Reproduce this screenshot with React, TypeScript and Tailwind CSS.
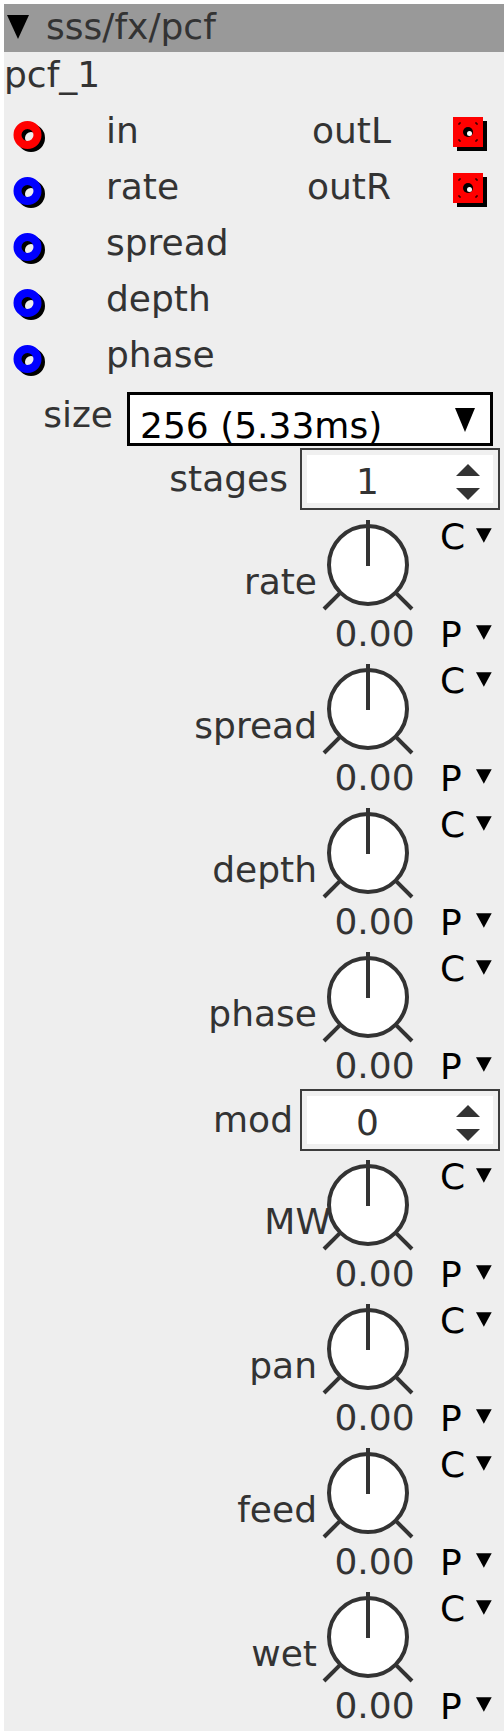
import React from "react";

type Port = { label: string; color: string; out?: string };

const ports: Port[] = [
  { label: "in", color: "#ff0000", out: "outL" },
  { label: "rate", color: "#0000ff", out: "outR" },
  { label: "spread", color: "#0000ff" },
  { label: "depth", color: "#0000ff" },
  { label: "phase", color: "#0000ff" },
];

function Tri({ w, h, className }: { w: number; h: number; className?: string }) {
  return (
    <svg width={w} height={h} viewBox={`0 0 ${w} ${h}`} className={className}>
      <polygon points={`0,0 ${w},0 ${w / 2},${h}`} fill="#000" />
    </svg>
  );
}

function InPort({ color }: { color: string }) {
  return (
    <svg width="44" height="56" viewBox="0 0 44 56">
      <circle cx="27" cy="35" r="10" fill="none" stroke="#000" strokeWidth="8" />
      <circle cx="23.5" cy="32" r="10" fill="none" stroke={color} strokeWidth="8" />
    </svg>
  );
}

function OutPort() {
  return (
    <svg width="40" height="56" viewBox="0 0 40 56">
      <rect x="7" y="18" width="30" height="30" fill="#000" />
      <rect x="3" y="14" width="30" height="30" fill="#ff0000" />
      <path d="M9 22v-2h2M25 20h2v2M9 36v2h2M25 38h2v-2" stroke="#000" strokeWidth="1" fill="none" />
      <circle cx="18" cy="29" r="5" fill="#000" />
      <circle cx="19.5" cy="30.5" r="2.5" fill="#fff" />
    </svg>
  );
}

function Spin({ value }: { value: string }) {
  return (
    <div className="flex h-[62px] w-[200px] border-2 border-[#3c3c3c] bg-[#f0f0f0] p-[5px]">
      <div className="flex flex-1 bg-white">
        <div className="w-[121px] pt-[6px] text-center leading-[42px] text-[#333]">{value}</div>
        <svg width="24" height="48" viewBox="0 0 24 48" className="ml-[28px]">
          <polygon points="0,21 24,21 12,9" fill="#333" />
          <polygon points="0,33 24,33 12,45" fill="#333" />
        </svg>
      </div>
    </div>
  );
}

function Knob({ label, shift }: { label: string; shift?: boolean }) {
  return (
    <div className="flex h-[144px] justify-end pr-[12px]">
      <div className={`mt-[49px] h-[42px] leading-[42px] text-[#333] ${shift ? "mr-[-13px]" : "mr-[1px]"}`}>
        {label}
      </div>
      <div className="flex w-[100px] flex-col">
        <svg width="100" height="101" viewBox="0 0 100 101">
          <circle cx="50" cy="53" r="39" fill="#fff" stroke="#333" strokeWidth="4" />
          <line x1="50" y1="8" x2="50" y2="54" stroke="#333" strokeWidth="4" />
          <line x1="22.4" y1="80.6" x2="6" y2="97" stroke="#333" strokeWidth="4" />
          <line x1="77.6" y1="80.6" x2="94" y2="97" stroke="#333" strokeWidth="4" />
        </svg>
        <div className="pl-[13px] text-center leading-[42px] text-[#333]">0.00</div>
      </div>
      <div className="flex w-[74px] flex-col justify-between pl-[22px] pt-[4px] text-black">
        <div className="flex h-[42px] leading-[42px]">
          <span className="w-[37px]">C</span>
          <Tri w={16} h={15} className="mt-[12px]" />
        </div>
        <div className="flex h-[42px] leading-[42px]">
          <span className="w-[37px]">P</span>
          <Tri w={16} h={15} className="mt-[11px]" />
        </div>
      </div>
    </div>
  );
}

export default function App() {
  return (
    <div className="min-h-[1736px] bg-white pl-[4px] pt-[4px] font-['DejaVu_Sans',sans-serif] text-[36px]">
      <div className="bg-[#eeeeee] pb-[3px]">
        <div className="flex h-[48px] bg-[#999999]">
          <Tri w={22} h={24} className="ml-[3px] mt-[11px]" />
          <span className="ml-[17px] mt-[2px] leading-[42px] text-[#333]">sss/fx/pcf</span>
        </div>

        <div className="h-[51px] pt-[2px] leading-[42px] text-[#333]">pcf_1</div>

        {ports.map((p) => (
          <div key={p.label} className="flex h-[56px] items-center text-[#333]">
            <div className="w-[102px]">
              <InPort color={p.color} />
            </div>
            <div className="flex-1 leading-[42px]">{p.label}</div>
            {p.out && (
              <>
                <div className="leading-[42px]">{p.out}</div>
                <div className="ml-[59px] mr-[14px]">
                  <OutPort />
                </div>
              </>
            )}
          </div>
        ))}

        <div className="mt-[9px] flex justify-end pr-[11px]">
          <div className="mr-[14px] mt-[2px] leading-[42px] text-[#333]">size</div>
          <div className="flex h-[54px] w-[366px] border-[3px] border-black bg-white">
            <div className="flex-1 pl-[10px] pt-[10px] leading-[42px] text-black">256 (5.33ms)</div>
            <Tri w={20} h={24} className="mr-[15px] mt-[13px]" />
          </div>
        </div>

        <div className="mt-[2px] flex items-center justify-end pr-[4px]">
          <div className="mr-[12px] leading-[42px] text-[#333]">stages</div>
          <Spin value="1" />
        </div>

        <div className="mt-[2px]">
          <Knob label="rate" />
          <Knob label="spread" />
          <Knob label="depth" />
          <Knob label="phase" />
        </div>

        <div className="mt-[1px] flex items-center justify-end pr-[4px]">
          <div className="mr-[7px] leading-[42px] text-[#333]">mod</div>
          <Spin value="0" />
        </div>

        <div className="mt-[1px]">
          <Knob label="MW" shift />
          <Knob label="pan" />
          <Knob label="feed" />
          <Knob label="wet" />
        </div>
      </div>
    </div>
  );
}
